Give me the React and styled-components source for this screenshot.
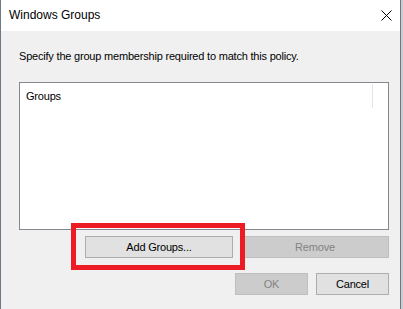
import styled, { createGlobalStyle } from "styled-components";

const GlobalStyle = createGlobalStyle`
    body {
        margin: 0;
        background: #c9ccd1;
        font-family: "Liberation Sans", Arial, sans-serif;
    }
`;

const App = () => {
    return (
        <>
            <GlobalStyle />
            <WindowStyles>
                <TitleBar>
                    <span>Windows Groups</span>
                    <CloseButton aria-label="Close">
                        <svg width="11" height="11" viewBox="0 0 11 11">
                            <path d="M0.5 0.5 L10.5 10.5 M10.5 0.5 L0.5 10.5" stroke="#000" strokeWidth="1" fill="none" />
                        </svg>
                    </CloseButton>
                </TitleBar>

                <BodyStyles>
                    <Prompt>Specify the group membership required to match this policy.</Prompt>

                    <ListBox>
                        <ListHeader>
                            <HeaderCell>Groups</HeaderCell>
                        </ListHeader>
                    </ListBox>

                    <ButtonRow className="actions">
                        <Highlighted>
                            <DialogButton $wide>Add Groups...</DialogButton>
                            <RedMark />
                        </Highlighted>
                        <DialogButton $wide disabled>Remove</DialogButton>
                    </ButtonRow>

                    <ButtonRow className="footer">
                        <DialogButton disabled>OK</DialogButton>
                        <DialogButton>Cancel</DialogButton>
                    </ButtonRow>
                </BodyStyles>
            </WindowStyles>
        </>
    );
};


const WindowStyles = styled.div`
    width: 401px;
    height: 309px;
    box-sizing: border-box;
    border-left: 1px solid #6f7885;
    border-right: 1px solid #6f7885;
    background: #f0f0f0;
    display: flex;
    flex-direction: column;
`;

const TitleBar = styled.div`
    height: 31px;
    flex-shrink: 0;
    background: #fff;
    display: flex;
    align-items: center;
    justify-content: space-between;
    padding: 0 8px 0 8px;
    font-size: 12px;
    color: #000;
        span{
            margin-top: -1px;
        }
`;

const CloseButton = styled.div`
    width: 11px;
    height: 11px;
    margin-top: -1px;
    display: flex;
        svg{
            display: block;
        }
`;

const BodyStyles = styled.div`
    flex: 1;
    display: flex;
    flex-direction: column;
    padding: 0 11px 0 18px;
    font-size: 11px;
    letter-spacing: -0.2px;
`;

const Prompt = styled.div`
    margin-top: 18px;
    line-height: 15px;
    color: #000;
`;

const ListBox = styled.div`
    margin-top: 18px;
    height: 148px;
    box-sizing: border-box;
    border: 1px solid #828790;
    background: #fff;
`;

const ListHeader = styled.div`
    display: flex;
    height: 24px;
    margin-top: 1px;
`;

const HeaderCell = styled.div`
    width: 353px;
    box-sizing: border-box;
    border-right: 1px solid #e5e5e5;
    padding: 6px 0 0 6px;
    color: #000;
`;

const ButtonRow = styled.div`
    display: flex;
    justify-content: flex-end;
    gap: 8px;

        &.actions{
            margin-top: 6px;
        }

        &.footer{
            margin-top: 15px;
        }
`;

const DialogButton = styled.button`
    width: ${(p) => (p.$wide ? "148px" : "73px")};
    height: 22px;
    box-sizing: border-box;
    border: 1px solid #adadad;
    background: #e1e1e1;
    color: #000;
    font-family: "Liberation Sans", Arial, sans-serif;
    font-size: 11px;
    letter-spacing: -0.2px;
    padding: 0;
    border-radius: 0;

        &:disabled{
            border-color: #bfbfbf;
            background: #cccccc;
            color: #838383;
        }
`;

const Highlighted = styled.div`
    position: relative;
    display: flex;
`;

const RedMark = styled.div`
    position: absolute;
    left: -14px;
    right: -12px;
    top: -13px;
    bottom: -12px;
    border: 5px solid #ed1c24;
    pointer-events: none;
`;


export default App;
